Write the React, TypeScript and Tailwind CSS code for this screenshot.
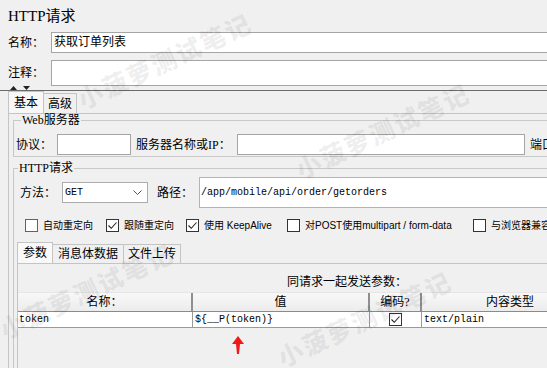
import React from "react";

const serif = "font-['Liberation_Serif','Noto_Sans_CJK_SC',serif]";
const mono = "font-['Liberation_Mono','Noto_Sans_CJK_SC',monospace]";
const sans = "font-['Liberation_Sans','Noto_Sans_CJK_SC',sans-serif]";

function Check({ checked, blue }: { checked?: boolean; blue?: boolean }) {
  return (
    <span
      className={`w-[13px] h-[13px] shrink-0 border bg-white flex items-center justify-center ${
        blue ? "border-[#2b6cc4]" : "border-[#333333]"
      }`}
    >
      {checked && (
        <svg width="11" height="11" viewBox="0 0 11 11" fill="none">
          <path d="M1.5 5.5 L4.3 8.3 L9.5 2.5" stroke="#222" strokeWidth="1.1" />
        </svg>
      )}
    </span>
  );
}

function CheckItem({ label, checked, blue, w }: { label: string; checked?: boolean; blue?: boolean; w: string }) {
  return (
    <div className={`flex items-center gap-[5px] shrink-0 ${w}`}>
      <Check checked={checked} blue={blue} />
      <span className={`${sans} text-[10px] leading-[13px] whitespace-nowrap`}>{label}</span>
    </div>
  );
}

// faint diagonal watermark lying over the page
function Watermark({ x, y }: { x: string; y: string }) {
  return (
    <span
      className={`absolute ${x} ${y} pointer-events-none select-none -rotate-[25deg] font-['Noto_Sans_CJK_SC',sans-serif] font-black text-[25px] tracking-[2px] text-black/[0.07] whitespace-nowrap`}
    >
      小菠萝测试笔记
    </span>
  );
}

export default function App() {
  return (
    <div className={`relative w-[547px] h-[368px] overflow-hidden bg-[#f0f0f0] text-black ${serif}`}>
      <div className="w-[640px] pl-[8px]">
        {/* Title */}
        <div className="pt-[6px] h-[26px] text-[15px] leading-[20px]">HTTP请求</div>

        {/* 名称 */}
        <div className="flex items-center h-[21px] mt-[6px]">
          <span className="w-[43px] text-[12px]">名称：</span>
          <div className="flex-1 h-full border border-[#a5a5a5] bg-white text-[12px] leading-[19px] px-[2px]">
            获取订单列表
          </div>
        </div>

        {/* 注释 */}
        <div className="flex items-center h-[26px] mt-[7px]">
          <span className="w-[43px] text-[12px]">注释：</span>
          <div className="flex-1 h-full border border-[#a5a5a5] bg-white" />
        </div>

        {/* splitter */}
        <div className="flex items-end gap-[6px] h-[4px] -ml-[6px] pl-[8px]">
          <svg width="7" height="4" viewBox="0 0 7 4">
            <polygon points="3.5,0 7,4 0,4" fill="#222" />
          </svg>
          <svg width="7" height="4" viewBox="0 0 7 4">
            <polygon points="0,0 7,0 3.5,4" fill="#222" />
          </svg>
        </div>
        <div className="h-[1px] bg-[#6b6b6b] -ml-[8px]" />

        {/* main tabs */}
        <div className="flex items-end h-[22px] text-[12px]">
          <div className="w-[36px] h-[22px] border-t border-l border-r border-[#c4c4c4] bg-[#f7f7f7] flex items-center justify-center">
            基本
          </div>
          <div className="w-[33px] h-[20px] border-t border-r border-[#c4c4c4] flex items-center justify-center">
            高级
          </div>
        </div>

        {/* main panel */}
        <div className="border-t border-l border-[#c4c4c4] pl-[4px] h-[260px]">
          {/* Web服务器 */}
          <fieldset className="border border-[#c8c8c8] pl-[2px] pb-[1px]">
            <legend className="ml-[5px] px-[1px] text-[12px] leading-[12px]">Web服务器</legend>
            <div className="flex items-center h-[21px] mt-[8px] text-[12px]">
              <span className="w-[41px]">协议：</span>
              <div className="w-[74px] h-full border border-[#a5a5a5] bg-white" />
              <span className="ml-[5px] w-[101px] whitespace-nowrap">服务器名称或IP：</span>
              <div className="w-[288px] h-full border border-[#a5a5a5] bg-white" />
              <span className="ml-[5px] whitespace-nowrap">端口号：</span>
            </div>
          </fieldset>

          {/* HTTP请求 */}
          <fieldset className="mt-[4px] border-l border-t border-[#c8c8c8] h-[220px]">
            <legend className="ml-[4px] px-[1px] text-[12px] leading-[14px]">HTTP请求</legend>
            <div className="flex items-center h-[31px] mt-[2px] pl-[6px] text-[12px]">
              <span className="w-[42px]">方法：</span>
              <div className="w-[86px] h-[21px] border border-[#acacac] bg-white flex items-center justify-between pl-[2px] pr-[5px]">
                <span className={`${mono} text-[10px]`}>GET</span>
                <svg width="9" height="5" viewBox="0 0 9 5" fill="none">
                  <path d="M0.5 0.5 L4.5 4.5 L8.5 0.5" stroke="#555" strokeWidth="1" />
                </svg>
              </div>
              <span className="ml-[9px] w-[42px]">路径：</span>
              <div className="w-[400px] h-full border border-[#b4b4b4] bg-white flex items-center pl-[1px]">
                <span className={`${mono} text-[10px]`}>/app/mobile/api/order/getorders</span>
              </div>
            </div>

            <div className="flex items-center mt-[11px] ml-[11px]">
              <CheckItem label="自动重定向" blue w="w-[81px]" />
              <CheckItem label="跟随重定向" checked w="w-[80px]" />
              <CheckItem label="使用 KeepAlive" checked w="w-[101px]" />
              <CheckItem label="对POST使用multipart / form-data" w="w-[186px]" />
              <CheckItem label="与浏览器兼容的头" w="w-[120px]" />
            </div>

            {/* inner tabs */}
            <div className="flex items-end h-[21px] mt-[10px] ml-[3px] text-[12px]">
              <div className="w-[36px] h-[21px] border-t border-l border-r border-[#c4c4c4] bg-[#f9f9f9] flex items-center justify-center">
                参数
              </div>
              <div className="w-[71px] h-[19px] border-t border-r border-[#c4c4c4] flex items-center justify-center">
                消息体数据
              </div>
              <div className="w-[57px] h-[19px] border-t border-r border-[#c4c4c4] flex items-center justify-center">
                文件上传
              </div>
            </div>
            <div className="ml-[3px] border-t border-l border-[#c4c4c4] h-[120px]">
              <div className="pt-[10px] pl-[269px] text-[12px] leading-[16px] whitespace-nowrap">
                同请求一起发送参数：
              </div>
              <div className="mt-[2px] w-[580px] text-[12px]">
                <div className="flex h-[20px] border-t border-b border-t-[#e6e6e6] border-b-[#8a8a8a] bg-gradient-to-b from-[#f8f8f8] to-[#ececec]">
                  <div className="w-[175px] border-r-2 border-[#8f8f8f] flex items-center justify-center">名称：</div>
                  <div className="w-[177px] border-r-2 border-[#8f8f8f] flex items-center justify-center">值</div>
                  <div className="w-[52px] border-r-2 border-[#8f8f8f] flex items-center justify-center">编码?</div>
                  <div className="w-[176px] flex items-center justify-center">内容类型</div>
                </div>
                <div className={`flex h-[16px] bg-white border-b border-[#9a9a9a] ${mono} text-[10px] leading-[15px]`}>
                  <div className="w-[175px] border-r border-[#9a9a9a] pl-[1px]">token</div>
                  <div className="w-[177px] border-r border-[#9a9a9a] pl-[2px]">{"${__P(token)}"}</div>
                  <div className="w-[52px] border-r border-[#9a9a9a] flex items-center justify-center">
                    <Check checked />
                  </div>
                  <div className="w-[176px] pl-[2px]">text/plain</div>
                </div>
              </div>
            </div>
          </fieldset>
        </div>
      </div>

      {/* red arrow */}
      <svg className="absolute left-[232px] top-[336px]" width="12" height="18" viewBox="0 0 12 18">
        <polygon points="6,0 12,8 8,8 7,18 5,18 4,8 0,8" fill="#f01818" />
      </svg>

      <Watermark x="left-[70px]" y="top-[42px]" />
      <Watermark x="left-[-8px]" y="top-[272px]" />
      <Watermark x="left-[288px]" y="top-[112px]" />
      <Watermark x="left-[270px]" y="top-[300px]" />
    </div>
  );
}
